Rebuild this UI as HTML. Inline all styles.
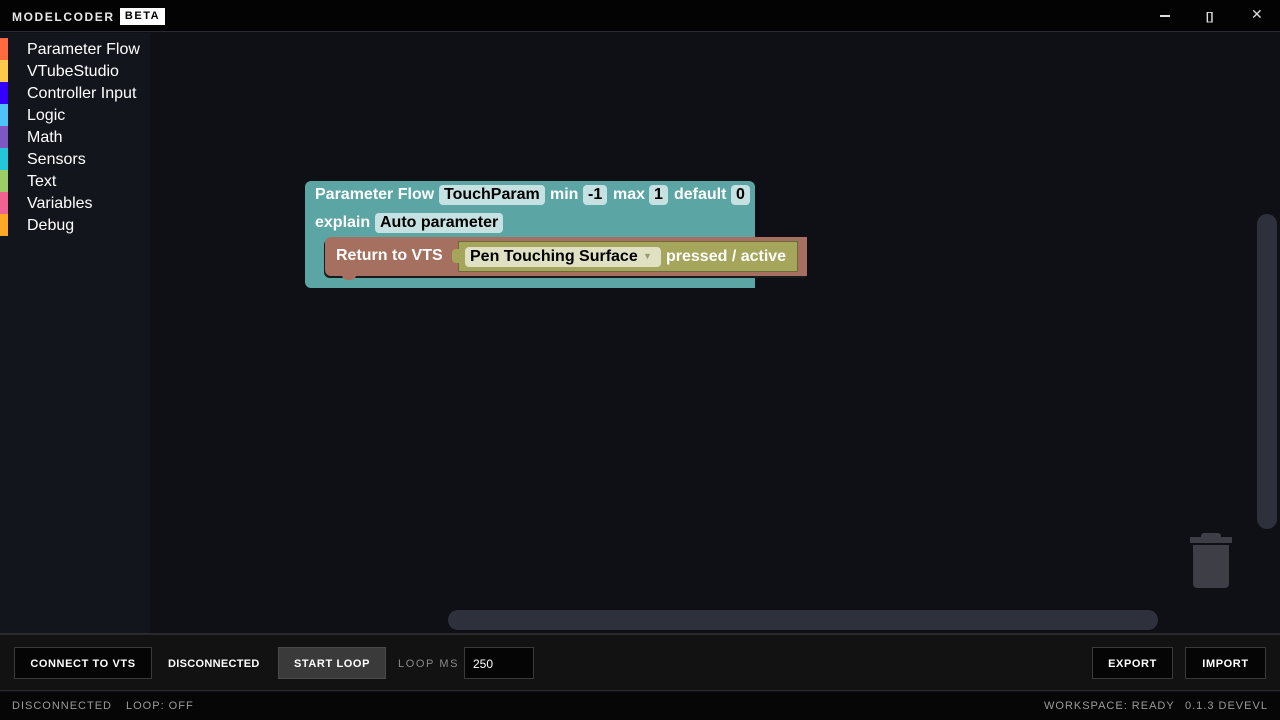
<!DOCTYPE html>
<html><head><style>
*{margin:0;padding:0;box-sizing:border-box}
body{width:1280px;height:720px;background:#0f1016;font-family:"Liberation Sans",sans-serif;position:relative;overflow:hidden}
.abs{position:absolute}
#title{left:0;top:0;width:1280px;height:32px;background:#030304;border-bottom:1px solid #2a2b30}
#side{left:0;top:33px;width:150px;height:600px;background:#13151d}
.cat{position:absolute;left:0;height:22px;width:150px;color:#fff;font-size:16px;line-height:22px}
.cat i{position:absolute;left:0;top:0;width:8px;height:22px}
.cat span{position:absolute;left:27px;top:1px}
.b{font-weight:bold;color:#fff;font-size:16px;position:absolute;white-space:nowrap}
.f{position:absolute;background:#c6e1e1;color:#000;border-radius:4px;font-weight:bold;font-size:16px;height:20px;line-height:20px;padding:0 5px;white-space:nowrap}
.btn{position:absolute;border:1px solid #3a3a3a;background:#050505;color:#fff;font-size:11px;font-weight:bold;letter-spacing:.6px;text-align:center;line-height:32px;height:32px}
.st{position:absolute;top:700px;color:#9a9a9a;font-size:11px;letter-spacing:1px}
</style></head><body>
<div id="title" class="abs">
 <div class="abs" style="left:12px;top:10px;color:#e8e8e8;font-weight:bold;font-size:12px;letter-spacing:1.6px">MODELCODER</div>
 <div class="abs" style="left:120px;top:8px;width:45px;height:17px;background:#fff;color:#000;font-size:11px;font-weight:bold;letter-spacing:1.5px;text-align:center;line-height:17px">BETA</div>
 <div class="abs" style="left:1160px;top:15px;width:10px;height:2px;background:#ddd"></div>
 <div class="abs" style="left:1206px;top:11px;color:#ddd;font-size:11px;font-weight:bold">[]</div>
 <div class="abs" style="left:1251px;top:6px;color:#ddd;font-size:14px">✕</div>
</div>
<div id="side" class="abs">
 <div class="cat" style="top:5px"><i style="background:#ff6b3d"></i><span>Parameter Flow</span></div>
 <div class="cat" style="top:27px"><i style="background:#ffc94d"></i><span>VTubeStudio</span></div>
 <div class="cat" style="top:49px"><i style="background:#3300ff"></i><span>Controller Input</span></div>
 <div class="cat" style="top:71px"><i style="background:#4fc3f7"></i><span>Logic</span></div>
 <div class="cat" style="top:93px"><i style="background:#7e57c2"></i><span>Math</span></div>
 <div class="cat" style="top:115px"><i style="background:#26c6da"></i><span>Sensors</span></div>
 <div class="cat" style="top:137px"><i style="background:#9ccc65"></i><span>Text</span></div>
 <div class="cat" style="top:159px"><i style="background:#f06292"></i><span>Variables</span></div>
 <div class="cat" style="top:181px"><i style="background:#ffa726"></i><span>Debug</span></div>
</div>
<div class="abs" style="left:305px;top:181px;width:450px;height:107px;background:#5ba5a5;border-radius:6px 6px 0 6px"></div>
<div class="b" style="left:315px;top:186px">Parameter Flow</div>
<div class="f" style="left:439px;top:185px">TouchParam</div>
<div class="b" style="left:550px;top:186px">min</div>
<div class="f" style="left:583px;top:185px">-1</div>
<div class="b" style="left:613px;top:186px">max</div>
<div class="f" style="left:649px;top:185px">1</div>
<div class="b" style="left:674px;top:186px">default</div>
<div class="f" style="left:731px;top:185px">0</div>
<div class="b" style="left:315px;top:214px">explain</div>
<div class="f" style="left:375px;top:213px">Auto parameter</div>
<div class="abs" style="left:325px;top:237px;width:482px;height:39px;background:#a5705f;border-radius:6px 0 0 6px;box-shadow:-1px 2px 0 #1a1a1a"></div>
<div class="abs" style="left:342px;top:275px;width:14px;height:5px;background:#a5705f;border-radius:0 0 6px 6px"></div>
<div class="b" style="left:336px;top:247px">Return to VTS</div>
<div class="abs" style="left:458px;top:241px;width:340px;height:31px;background:#a5a55b;border:1px solid #6c6c3a"></div>
<div class="abs" style="left:452px;top:249px;width:8px;height:14px;background:#a5a55b;border-radius:4px 0 0 4px"></div>
<div class="abs" style="left:465px;top:247px;width:196px;height:20px;background:#e0e0c3;border-radius:4px"></div>
<div class="b" style="left:470px;top:248px;color:#000">Pen Touching Surface</div>
<div class="abs" style="left:643px;top:251px;color:#9a9a70;font-size:9px">▼</div>
<div class="b" style="left:666px;top:248px">pressed / active</div>
<div class="abs" style="left:1257px;top:214px;width:20px;height:315px;background:#2e303c;border-radius:10px"></div>
<div class="abs" style="left:448px;top:610px;width:710px;height:20px;background:#2e303c;border-radius:10px"></div>
<div class="abs" style="left:1190px;top:537px;width:42px;height:6px;background:#3e3f46"></div>
<div class="abs" style="left:1201px;top:533px;width:20px;height:6px;background:#3e3f46;border-radius:3px 3px 0 0"></div>
<div class="abs" style="left:1193px;top:545px;width:36px;height:43px;background:#3e3f46;border-radius:0 0 4px 4px"></div>
<div class="abs" style="left:0;top:633px;width:1280px;height:58px;background:#121212;border-top:2px solid #2a2a2a;border-bottom:1px solid #2a2a2a"></div>
<div class="btn" style="left:14px;top:647px;width:138px">CONNECT TO VTS</div>
<div class="abs" style="left:168px;top:658px;color:#fff;font-size:11px;font-weight:bold;letter-spacing:.3px">DISCONNECTED</div>
<div class="btn" style="left:278px;top:647px;width:108px;background:#3a3a3a;border-color:#4a4a4a">START LOOP</div>
<div class="abs" style="left:398px;top:658px;color:#8a8a8a;font-size:11px;letter-spacing:1.6px">LOOP MS</div>
<div class="abs" style="left:464px;top:647px;width:70px;height:32px;background:#050505;border:1px solid #3a3a3a;color:#fff;font-size:12px;padding:9px 0 0 8px">250</div>
<div class="btn" style="left:1092px;top:647px;width:81px">EXPORT</div>
<div class="btn" style="left:1185px;top:647px;width:81px">IMPORT</div>
<div class="abs" style="left:0;top:692px;width:1280px;height:28px;background:#060606"></div>
<div class="st" style="left:12px">DISCONNECTED</div>
<div class="st" style="left:126px">LOOP: OFF</div>
<div class="st" style="left:1044px">WORKSPACE: READY</div>
<div class="st" style="left:1185px">0.1.3 DEVEVL</div>
</body></html>
